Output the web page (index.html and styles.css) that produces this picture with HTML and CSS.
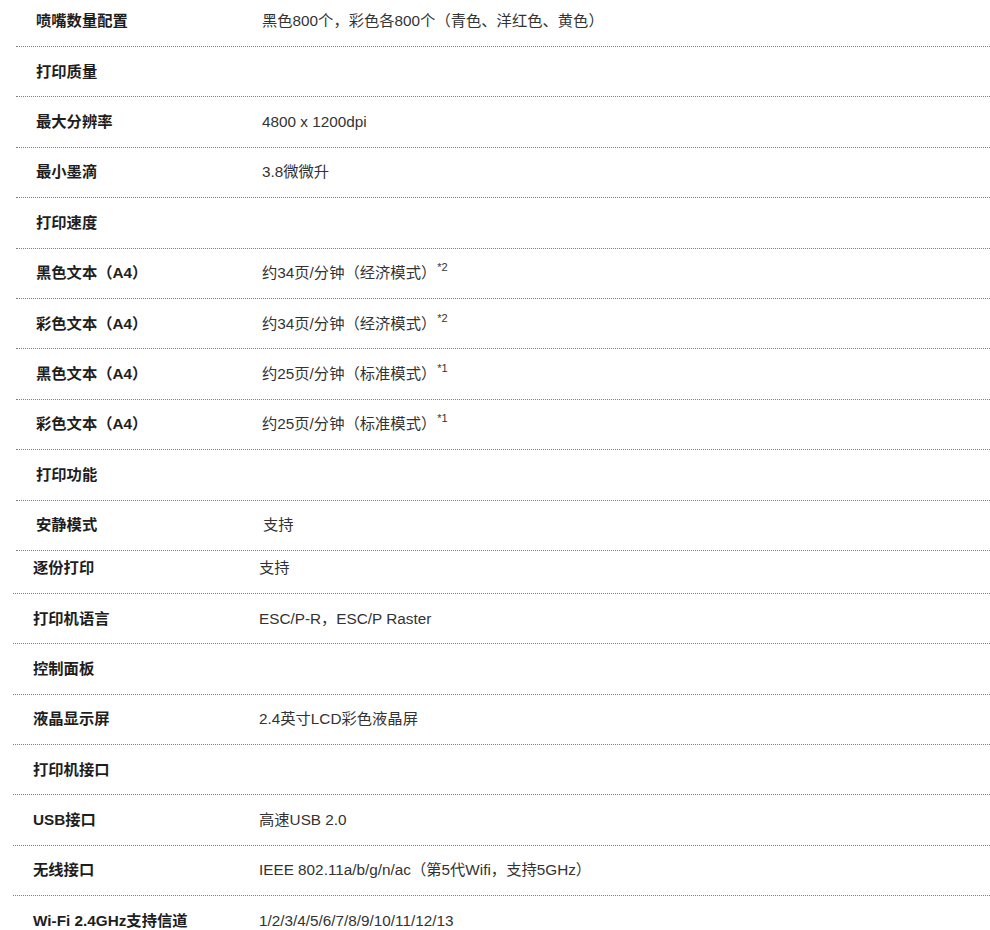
FILE: index.html
```html
<!DOCTYPE html>
<html lang="zh-CN">
<head>
<meta charset="utf-8">
<link rel="stylesheet" href="styles.css">
</head>
<body>
<div class="spec spec-a">
  <div class="row"><div class="label">喷嘴数量配置</div><div class="value">黑色800个，彩色各800个（青色、洋红色、黄色）</div></div>
  <div class="row"><div class="label">打印质量</div><div class="value"></div></div>
  <div class="row"><div class="label">最大分辨率</div><div class="value">4800 x 1200dpi</div></div>
  <div class="row"><div class="label">最小墨滴</div><div class="value">3.8微微升</div></div>
  <div class="row"><div class="label">打印速度</div><div class="value"></div></div>
  <div class="row"><div class="label">黑色文本（A4）</div><div class="value">约34页/分钟（经济模式）<sup>*2</sup></div></div>
  <div class="row"><div class="label">彩色文本（A4）</div><div class="value">约34页/分钟（经济模式）<sup>*2</sup></div></div>
  <div class="row"><div class="label">黑色文本（A4）</div><div class="value">约25页/分钟（标准模式）<sup>*1</sup></div></div>
  <div class="row"><div class="label">彩色文本（A4）</div><div class="value">约25页/分钟（标准模式）<sup>*1</sup></div></div>
  <div class="row"><div class="label">打印功能</div><div class="value"></div></div>
  <div class="row"><div class="label">安静模式</div><div class="value shifted">支持</div></div>
</div>
<div class="spec spec-b">
  <div class="row row-short"><div class="label">逐份打印</div><div class="value">支持</div></div>
  <div class="row"><div class="label">打印机语言</div><div class="value">ESC/P-R，ESC/P Raster</div></div>
  <div class="row"><div class="label">控制面板</div><div class="value"></div></div>
  <div class="row"><div class="label">液晶显示屏</div><div class="value">2.4英寸LCD彩色液晶屏</div></div>
  <div class="row"><div class="label">打印机接口</div><div class="value"></div></div>
  <div class="row"><div class="label">USB接口</div><div class="value">高速USB 2.0</div></div>
  <div class="row"><div class="label">无线接口</div><div class="value">IEEE 802.11a/b/g/n/ac（第5代Wifi，支持5GHz）</div></div>
  <div class="row last"><div class="label">Wi-Fi 2.4GHz支持信道</div><div class="value">1/2/3/4/5/6/7/8/9/10/11/12/13</div></div>
</div>
</body>
</html>
```
FILE: styles.css
```css
html, body {
  margin: 0;
  padding: 0;
  background: #fff;
  overflow: hidden;
}
body {
  font-family: "Liberation Sans", Arial, "Noto Sans CJK SC", sans-serif;
  font-size: 15.3px;
  color: #333;
}
.spec {
  display: flex;
  flex-direction: column;
}
.spec-a {
  margin-left: 16px;
  margin-top: -3.4px;
}
.spec-b {
  margin-left: 13px;
}
.row {
  box-sizing: border-box;
  height: 50.4px;
  display: flex;
  align-items: center;
  border-bottom: 1px dotted #808080;
}
.spec-b .row {
  height: 50.35px;
}
.spec-b .row.row-short {
  height: 43px;
  padding-bottom: 8px;
}
.row.last {
  border-bottom: none;
}
.label {
  box-sizing: border-box;
  width: 246px;
  flex: none;
  padding-left: 20px;
  font-weight: bold;
  color: #1e1e1e;
  line-height: 20px;
}
.value {
  flex: 1;
  line-height: 20px;
  color: #333;
}
.value.shifted {
  padding-left: 1px;
}
sup {
  font-size: 11px;
  line-height: 0;
  vertical-align: 0;
  position: relative;
  top: -7px;
  margin-left: 1px;
}
```
